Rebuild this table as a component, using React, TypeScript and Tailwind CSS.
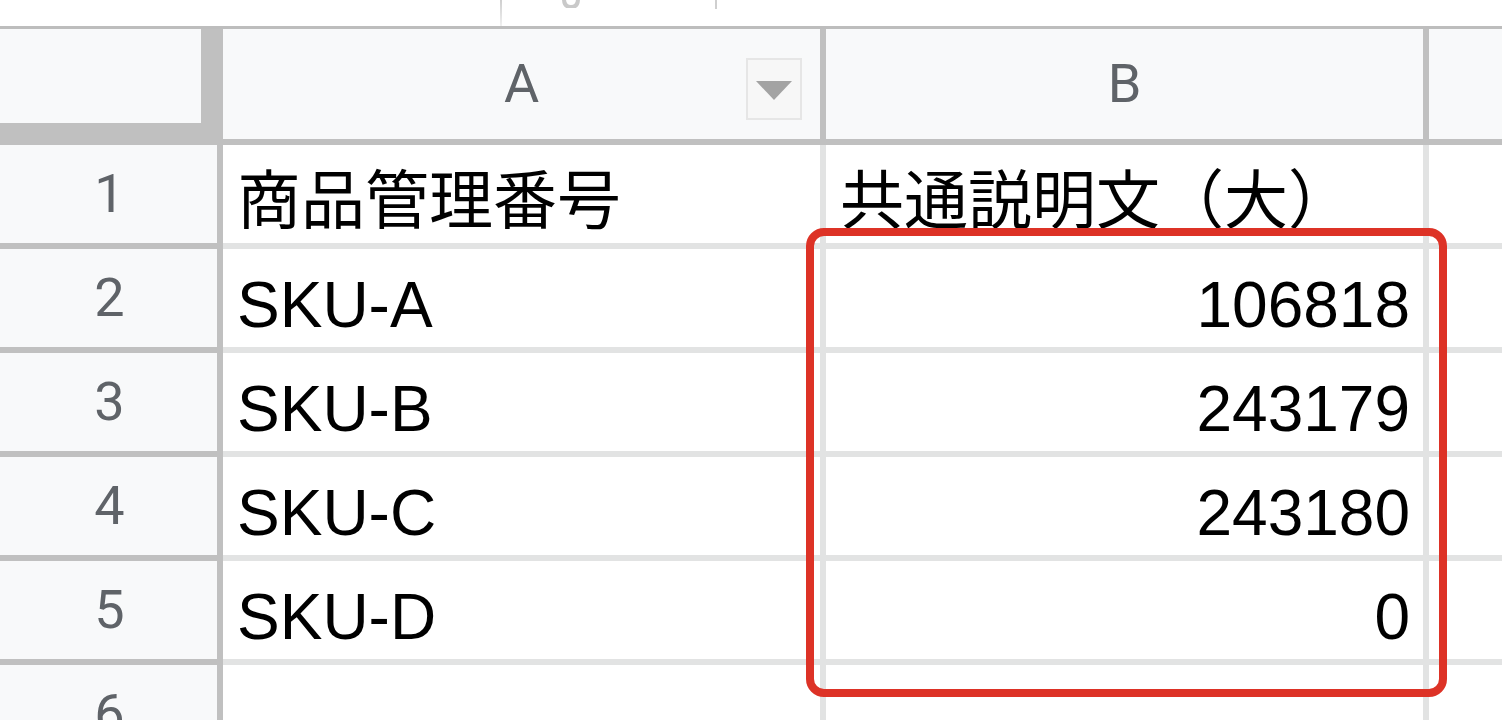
const cellFont = "font-['Liberation_Sans','Noto_Sans_CJK_JP',sans-serif]"
const headFont = "font-['Roboto','Liberation_Sans',sans-serif]"

const rows: { n: number; a: string; b: string }[] = [
  { n: 1, a: '商品管理番号', b: '共通説明文（大）' },
  { n: 2, a: 'SKU-A', b: '106818' },
  { n: 3, a: 'SKU-B', b: '243179' },
  { n: 4, a: 'SKU-C', b: '243180' },
  { n: 5, a: 'SKU-D', b: '0' },
  { n: 6, a: '', b: '' },
]

function DropdownButton() {
  return (
    <div className="absolute right-[18px] top-[29px] w-[56px] h-[62px] border-2 border-[#e6e6e6] bg-[#f7f7f7] flex items-center justify-center">
      <svg width="36" height="19" viewBox="0 0 36 19" className="mt-[3px]">
        <path d="M0 0 L36 0 L18 19 Z" fill="#a3a3a3" />
      </svg>
    </div>
  )
}

function Row({ n, a, b }: { n: number; a: string; b: string }) {
  const isNumber = /^\d+$/.test(b)
  return (
    <div className="flex h-[104px] shrink-0">
      <div
        className={`${headFont} w-[223px] shrink-0 bg-[#f8f9fa] border-r-[6px] border-b-[6px] border-[#c0c0c0] flex items-center justify-center text-[54px] leading-none text-[#5f6368] pl-[2px]`}
      >
        {n}
      </div>
      <div
        className={`${cellFont} w-[603px] shrink-0 border-r-[6px] border-b-[6px] border-[#e2e3e3] flex items-end pl-[14px] pb-[10px] text-[64px] leading-[64px] text-black whitespace-nowrap overflow-hidden`}
      >
        {a}
      </div>
      <div
        className={`${cellFont} w-[603px] shrink-0 border-r-[6px] border-b-[6px] border-[#e2e3e3] flex items-end pb-[10px] text-[64px] leading-[64px] text-black whitespace-nowrap overflow-hidden ${
          isNumber ? 'justify-end pr-[13px]' : 'pl-[14px]'
        }`}
      >
        {b}
      </div>
      <div className="flex-1 border-b-[6px] border-[#e2e3e3]" />
    </div>
  )
}

export default function App() {
  return (
    <div className="relative w-[1502px] h-[720px] overflow-hidden bg-white flex flex-col">
      {/* toolbar remnant */}
      <div className="h-[29px] shrink-0 border-b-[3px] border-[#bdbdbd] flex items-start">
        <div className="w-[500px] shrink-0" />
        <div className="w-[2px] h-[26px] bg-gradient-to-b from-[#cfcfcf] to-[#f0f0f0]" />
        <div className="w-[60px] shrink-0" />
        <svg width="18" height="9" viewBox="0 0 18 9" className="-mt-[1px]">
          <path d="M2 0 Q2 8 9 8 Q16 8 16 0" fill="none" stroke="#c9c9c9" strokeWidth="4" />
        </svg>
        <div className="w-[135px] shrink-0" />
        <div className="w-[2px] h-[9px] bg-[#cfcfcf]" />
      </div>

      {/* column headers */}
      <div className="flex h-[116px] shrink-0">
        <div className="w-[223px] shrink-0 bg-[#c0c0c0]">
          <div className="w-[201px] h-[94px] bg-[#f8f9fa]" />
        </div>
        <div
          className={`${headFont} relative w-[603px] shrink-0 bg-[#f8f9fa] border-r-[6px] border-b-[6px] border-[#c0c0c0] flex items-center justify-center text-[54px] leading-none text-[#5f6368]`}
        >
          A
          <DropdownButton />
        </div>
        <div
          className={`${headFont} w-[603px] shrink-0 bg-[#f8f9fa] border-r-[6px] border-b-[6px] border-[#c0c0c0] flex items-center justify-center text-[54px] leading-none text-[#5f6368]`}
        >
          B
        </div>
        <div className="flex-1 bg-[#f8f9fa] border-b-[6px] border-[#c0c0c0]" />
      </div>

      {rows.map((r) => (
        <Row key={r.n} {...r} />
      ))}

      {/* highlight annotation */}
      <div className="absolute left-[806px] top-[228px] w-[641px] h-[469px] border-[8px] border-[#dd3226] rounded-[18px] pointer-events-none" />
    </div>
  )
}
